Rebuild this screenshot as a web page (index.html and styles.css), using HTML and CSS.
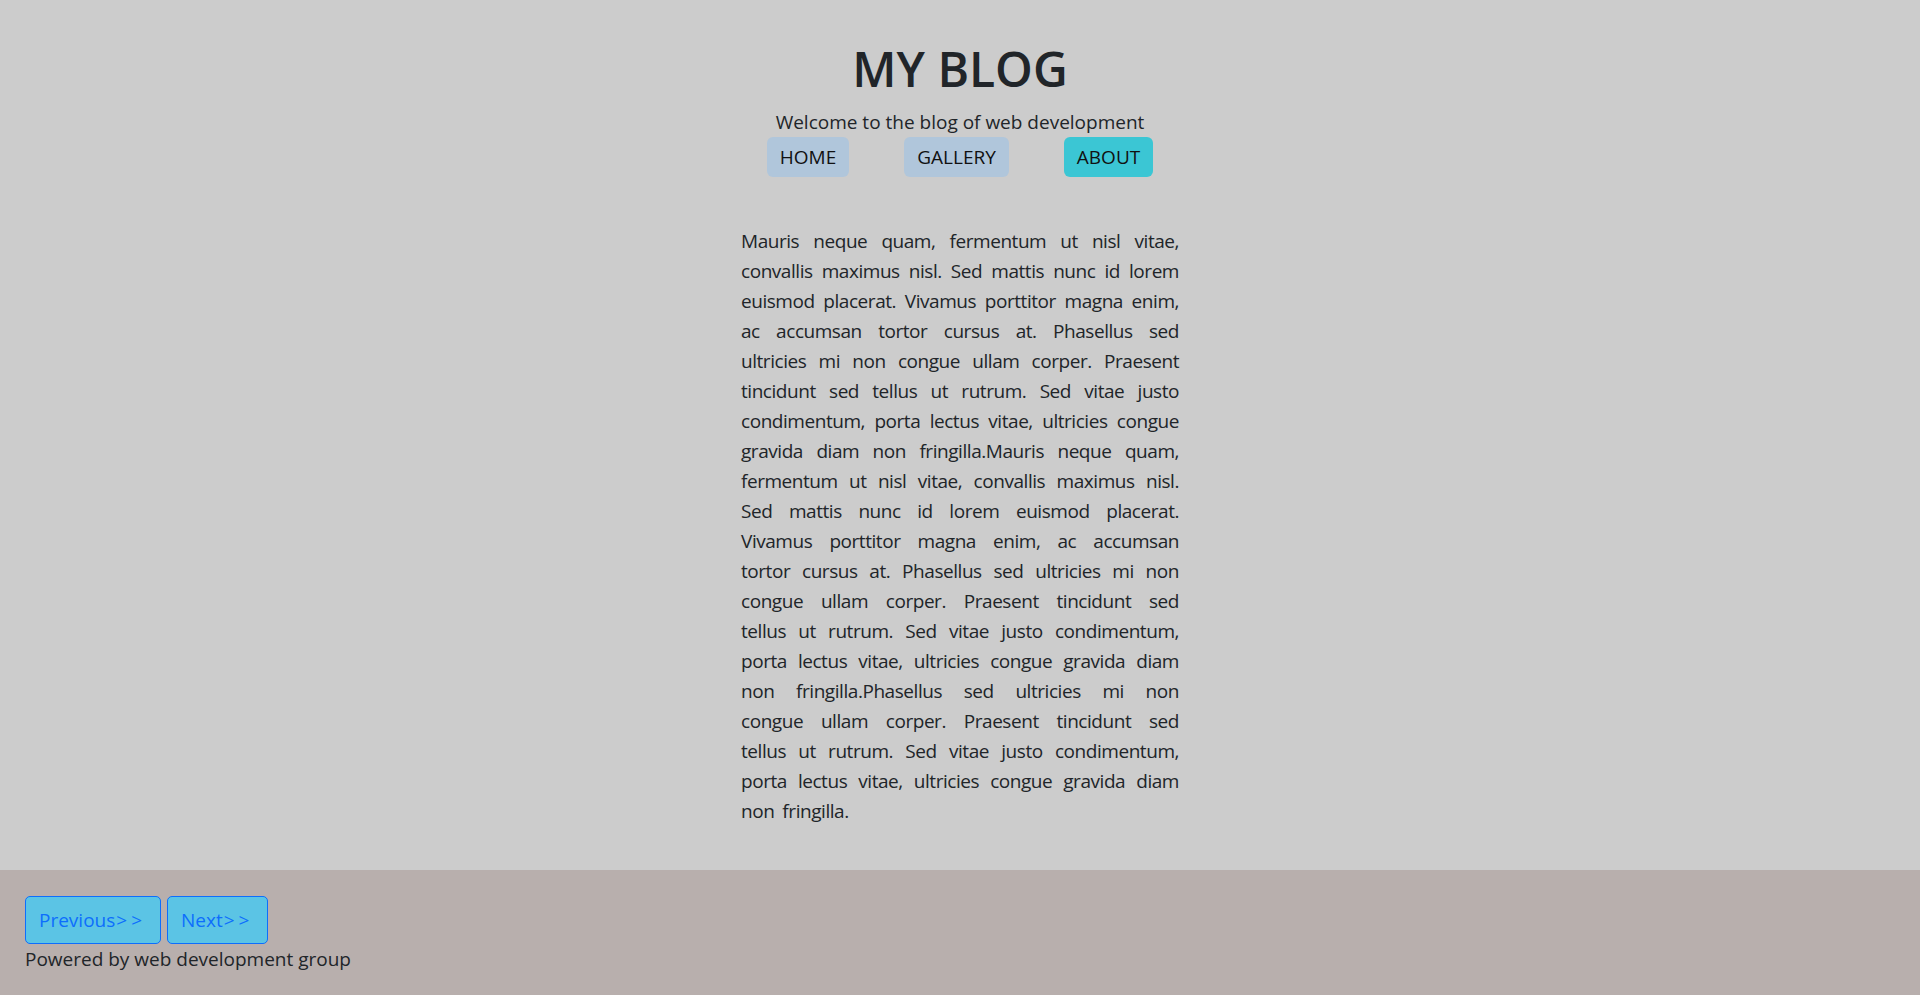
FILE: index.html
```html
<!DOCTYPE html>
<html lang="en">
<head>
<meta charset="utf-8">
<title>My Blog</title>
<link rel="stylesheet" href="styles.css">
</head>
<body>
<div class="page">
  <header class="masthead">
    <h1 class="title">MY BLOG</h1>
    <p class="tagline">Welcome to the blog of web development</p>
    <nav class="nav">
      <a class="nav-btn" href="#">HOME</a>
      <a class="nav-btn" href="#">GALLERY</a>
      <a class="nav-btn nav-btn-active" href="#">ABOUT</a>
    </nav>
  </header>
  <main class="content">
    <p class="article">Mauris neque quam, fermentum ut nisl vitae, convallis maximus nisl. Sed mattis nunc id lorem euismod placerat. Vivamus porttitor magna enim, ac accumsan tortor cursus at. Phasellus sed ultricies mi non congue ullam corper. Praesent tincidunt sed tellus ut rutrum. Sed vitae justo condimentum, porta lectus vitae, ultricies congue gravida diam non fringilla.Mauris neque quam, fermentum ut nisl vitae, convallis maximus nisl. Sed mattis nunc id lorem euismod placerat. Vivamus porttitor magna enim, ac accumsan tortor cursus at. Phasellus sed ultricies mi non congue ullam corper. Praesent tincidunt sed tellus ut rutrum. Sed vitae justo condimentum, porta lectus vitae, ultricies congue gravida diam non fringilla.Phasellus sed ultricies mi non congue ullam corper. Praesent tincidunt sed tellus ut rutrum. Sed vitae justo condimentum, porta lectus vitae, ultricies congue gravida diam non fringilla.</p>
  </main>
  <footer class="footer">
    <div class="pager">
      <button class="pager-btn" type="button">Previous<span class="arrows">&gt;&gt;</span></button>
      <button class="pager-btn" type="button">Next<span class="arrows">&gt;&gt;</span></button>
    </div>
    <p class="credit">Powered by web development group</p>
  </footer>
</div>
</body>
</html>
```

FILE: styles.css
```css
* { box-sizing: border-box; }

html, body {
  margin: 0;
  padding: 0;
}

body {
  background: #cccccc;
  color: #212529;
  font-family: "Open Sans", "Noto Sans", sans-serif;
  font-size: 19px;
  line-height: 30px;
}

.page {
  min-height: 995px;
  display: flex;
  flex-direction: column;
}

.masthead {
  display: flex;
  flex-direction: column;
  align-items: center;
  padding-top: 40px;
}

.title {
  margin: 0;
  font-size: 48px;
  font-weight: 560;
  line-height: 57px;
}

.tagline {
  margin: 11px 0 0;
  font-size: 19px;
  line-height: 29px;
}

.nav {
  display: flex;
  gap: 55px;
  margin-top: 0;
}

.nav-btn {
  display: block;
  height: 40px;
  padding: 1px 13px 0;
  line-height: 39px;
  border-radius: 6px;
  background: #b0c6db;
  color: #111;
  text-decoration: none;
  font-size: 19px;
}

.nav-btn-active {
  background: #3bc6d4;
}

.content {
  display: flex;
  justify-content: center;
  padding-top: 49px;
  padding-bottom: 44px;
}

.article {
  margin: 0;
  width: 438px;
  text-align: justify;
  line-height: 30px;
  letter-spacing: -0.45px;
  word-spacing: 3.5px;
}

.footer {
  flex: 1;
  background: #b8afad;
  padding: 26px 25px 20px;
}

.pager {
  display: flex;
  gap: 6px;
}

.pager-btn {
  font-family: inherit;
  font-size: 19px;
  line-height: 30px;
  padding: 8px 14px 8px 13px;
  background: #5bc4e5;
  color: #0d6efd;
  border: 1px solid #0d6efd;
  border-radius: 5px;
  cursor: pointer;
}

.arrows {
  letter-spacing: 4px;
  margin-left: 1px;
}

.credit {
  margin: 0;
  line-height: 30px;
}
```
